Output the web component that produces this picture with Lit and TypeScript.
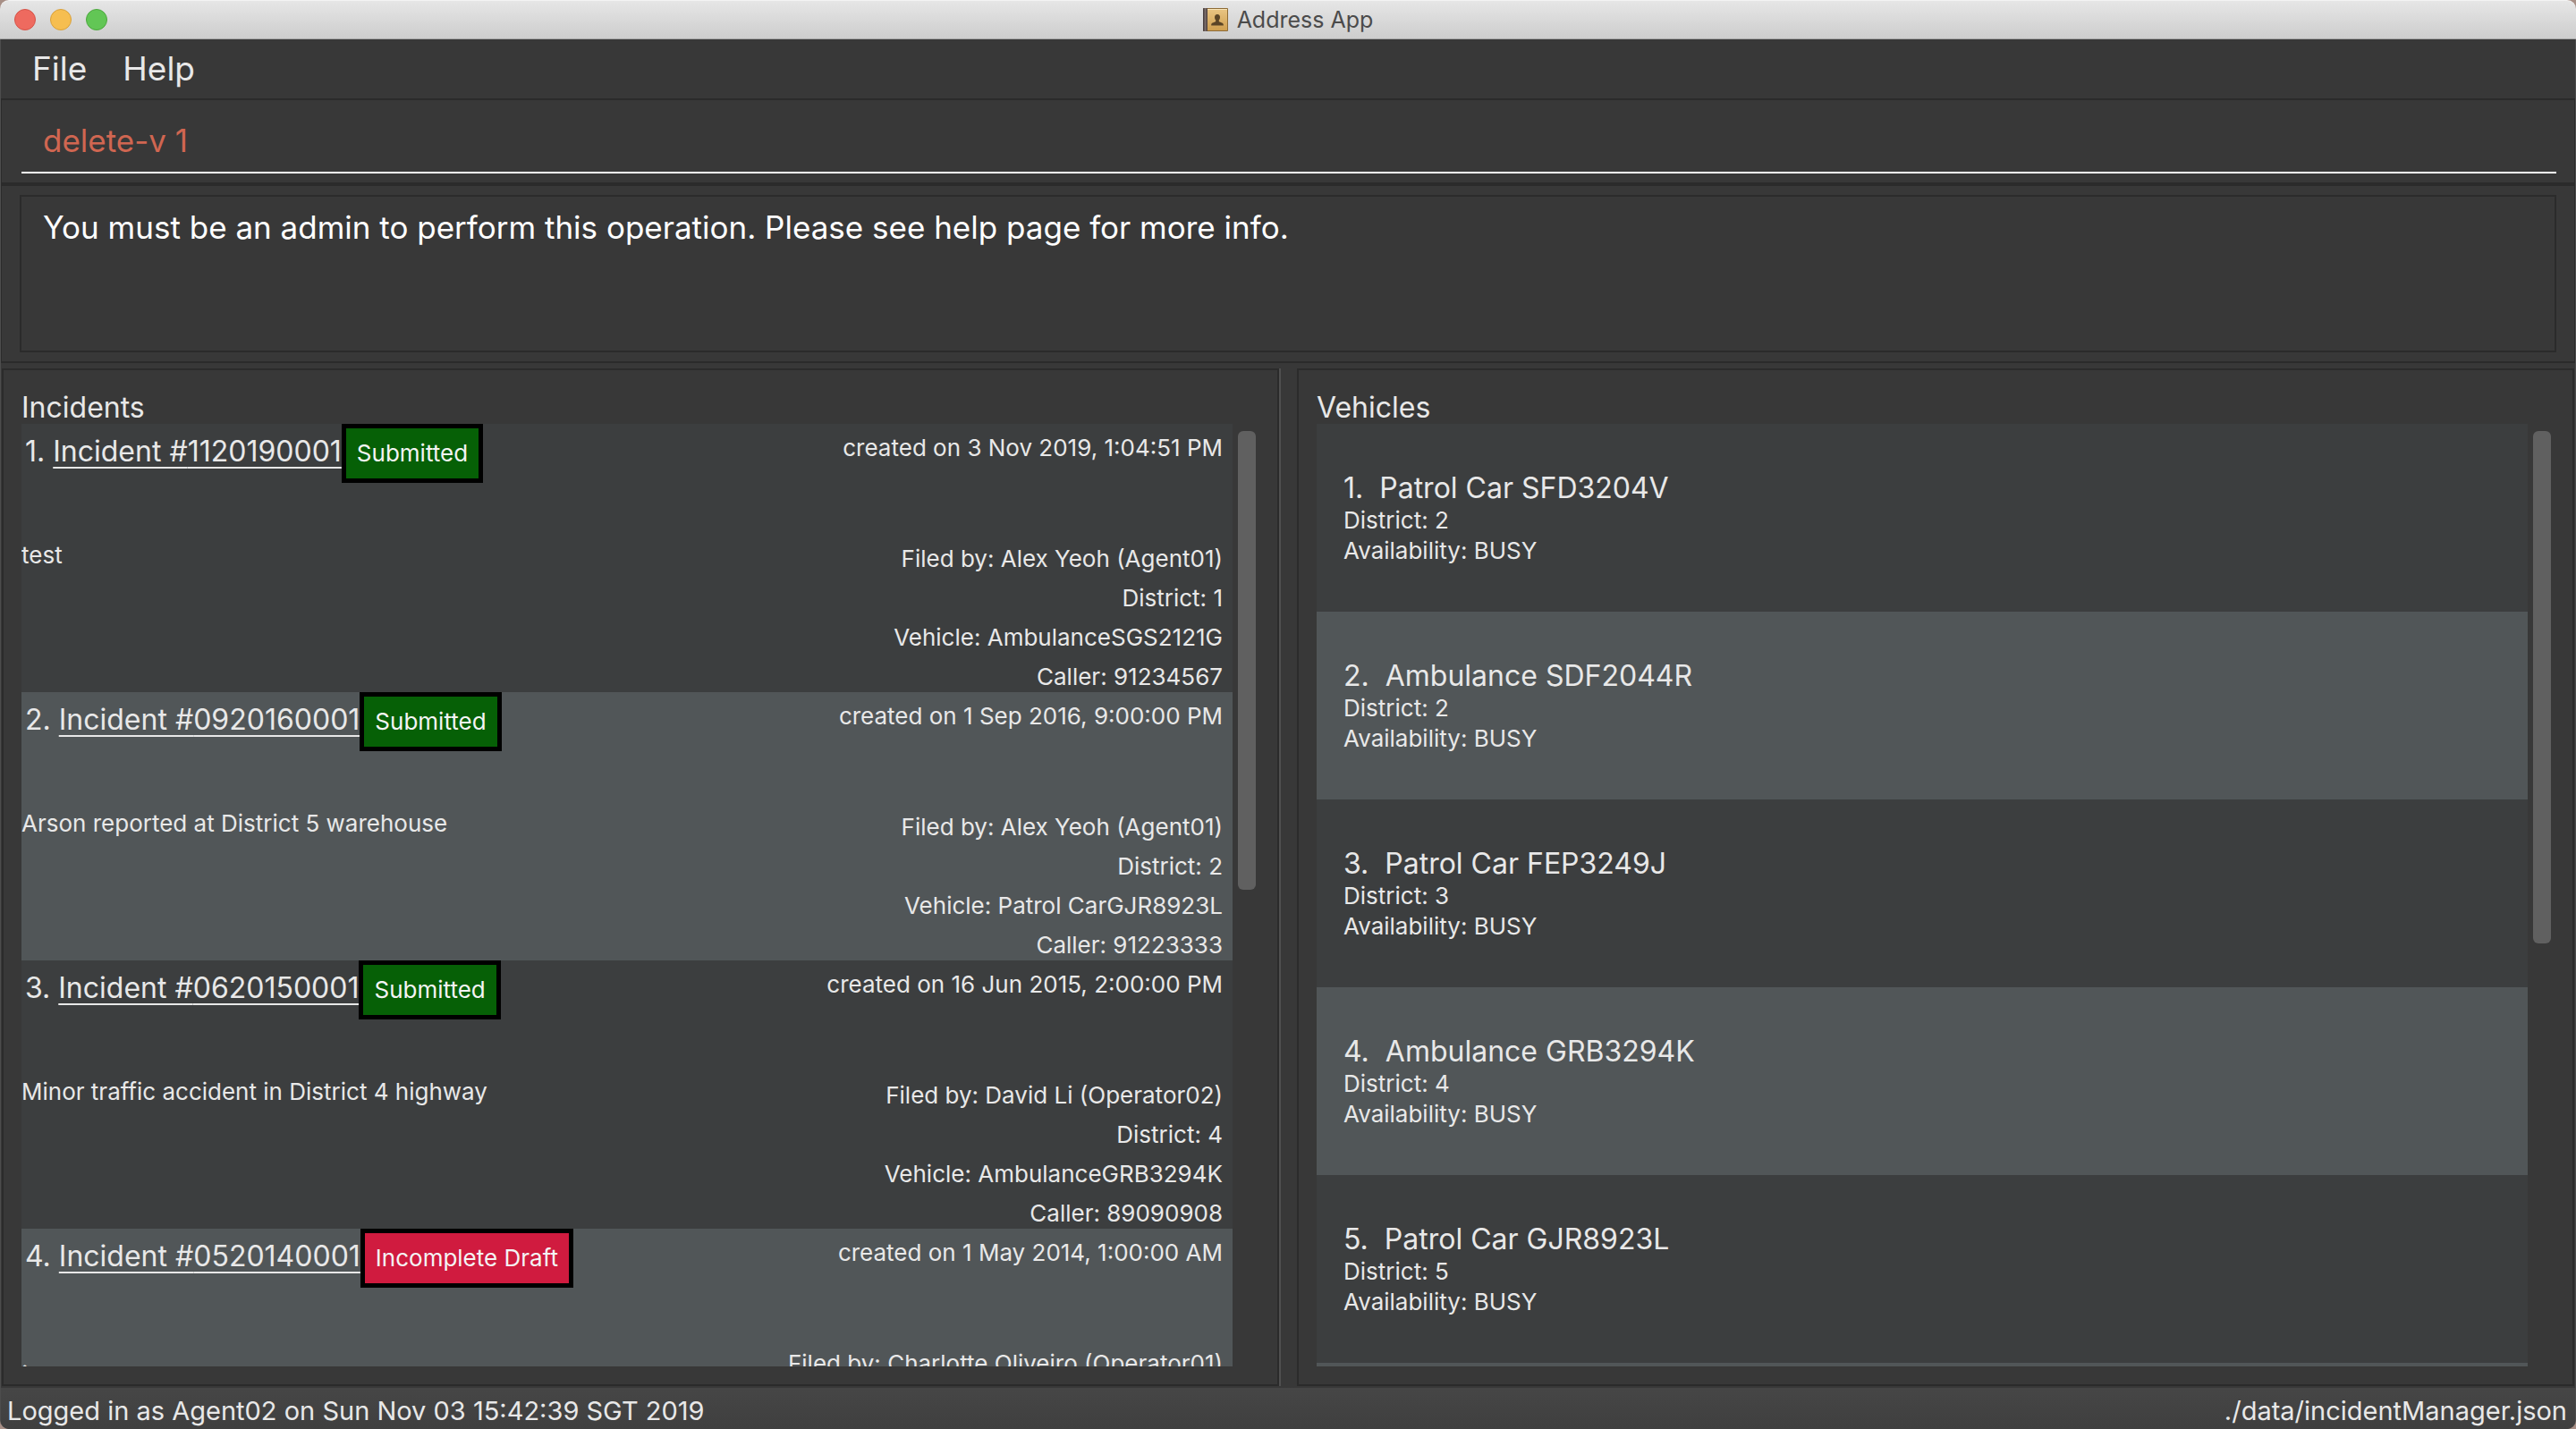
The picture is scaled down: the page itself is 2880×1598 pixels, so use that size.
import { LitElement, html, css, svg, nothing } from "lit";
import { customElement, property } from "lit/decorators.js";
import { classMap } from "lit/directives/class-map.js";
import { styleMap } from "lit/directives/style-map.js";

interface Incident {
  id: string;
  status: "Submitted" | "Incomplete Draft";
  created: string;
  description: string;
  filedBy: string;
  district?: number;
  vehicle?: string;
  caller?: string;
}

interface Vehicle {
  type: string;
  plate: string;
  district: number;
  availability: string;
}

const INCIDENTS: Incident[] = [
  {
    id: "1120190001",
    status: "Submitted",
    created: "3 Nov 2019, 1:04:51 PM",
    description: "test",
    filedBy: "Alex Yeoh (Agent01)",
    district: 1,
    vehicle: "AmbulanceSGS2121G",
    caller: "91234567",
  },
  {
    id: "0920160001",
    status: "Submitted",
    created: "1 Sep 2016, 9:00:00 PM",
    description: "Arson reported at District 5 warehouse",
    filedBy: "Alex Yeoh (Agent01)",
    district: 2,
    vehicle: "Patrol CarGJR8923L",
    caller: "91223333",
  },
  {
    id: "0620150001",
    status: "Submitted",
    created: "16 Jun 2015, 2:00:00 PM",
    description: "Minor traffic accident in District 4 highway",
    filedBy: "David Li (Operator02)",
    district: 4,
    vehicle: "AmbulanceGRB3294K",
    caller: "89090908",
  },
  {
    id: "0520140001",
    status: "Incomplete Draft",
    created: "1 May 2014, 1:00:00 AM",
    description: ".",
    filedBy: "Charlotte Oliveiro (Operator01)",
  },
];

const VEHICLES: Vehicle[] = [
  { type: "Patrol Car", plate: "SFD3204V", district: 2, availability: "BUSY" },
  { type: "Ambulance", plate: "SDF2044R", district: 2, availability: "BUSY" },
  { type: "Patrol Car", plate: "FEP3249J", district: 3, availability: "BUSY" },
  { type: "Ambulance", plate: "GRB3294K", district: 4, availability: "BUSY" },
  { type: "Patrol Car", plate: "GJR8923L", district: 5, availability: "BUSY" },
];

const bookIcon = svg`
  <svg viewBox="0 0 28 26" width="28" height="26" aria-hidden="true">
    <defs>
      <linearGradient id="cover" x1="0" y1="0" x2="0" y2="1">
        <stop offset="0" stop-color="#e9c583" />
        <stop offset="1" stop-color="#cf9f50" />
      </linearGradient>
      <linearGradient id="spine" x1="0" y1="0" x2="1" y2="0">
        <stop offset="0" stop-color="#3d3434" />
        <stop offset="0.5" stop-color="#7a6d6b" />
        <stop offset="1" stop-color="#4a3c36" />
      </linearGradient>
    </defs>
    <rect x="0" y="0" width="28" height="26" rx="1" fill="#8d6a35" />
    <rect x="5" y="1" width="22" height="24" fill="url(#cover)" />
    <rect x="5" y="1" width="22" height="1" fill="#f6e3b8" />
    <rect x="0" y="0" width="5" height="26" rx="1" fill="url(#spine)" />
    <path
      d="M16 7c2 0 3 1.400 3 3.200 0 1.500-.6 2.600-1.200 3.300v1.500c0 .8 5 1.200 5 3.500v1H9.200v-1c0-2.300 5-2.700 5-3.500v-1.500c-.6-.7-1.200-1.800-1.200-3.300C13 8.400 14 7 16 7z"
      fill="#5a4426"
    />
  </svg>
`;

@customElement("scroll-panel")
export class ScrollPanel extends LitElement {
  @property() heading = "";
  @property({ type: Number }) visible = 50;

  static styles = css`
    :host {
      display: flex;
      flex-direction: column;
      min-width: 0;
      min-height: 0;
      box-sizing: border-box;
      border: 2px solid #2b2b2b;
      padding: 24px 24px 20px 20px;
    }
    .heading {
      margin: 0;
      font-size: 32px;
      line-height: 36px;
      font-weight: 400;
      color: #e8e8e8;
    }
    .area {
      flex: 1;
      min-height: 0;
      display: flex;
      gap: 6px;
    }
    .list {
      flex: 1;
      min-width: 0;
      overflow: hidden;
    }
    .track {
      width: 20px;
      padding: 8px 0;
      box-sizing: border-box;
    }
    .thumb {
      border-radius: 6px;
      background: #606060;
    }
  `;

  render() {
    return html`
      <h2 class="heading">${this.heading}</h2>
      <div class="area">
        <div class="list"><slot></slot></div>
        <div class="track">
          <div class="thumb" style=${styleMap({ height: `${this.visible}%` })}></div>
        </div>
      </div>
    `;
  }
}

@customElement("app-root")
export class AppRoot extends LitElement {
  static styles = css`
    :host {
      display: flex;
      flex-direction: column;
      height: 100vh;
      overflow: hidden;
      background: #a78f86;
      color: #e8e8e8;
      font-family: Inter, "Liberation Sans", sans-serif;
      font-size: 26px;
    }
    button,
    input,
    textarea {
      font: inherit;
      color: inherit;
      background: none;
      border: 0;
      margin: 0;
      padding: 0;
      outline: 0;
    }
    .titlebar {
      display: grid;
      grid-template-columns: 1fr auto 1fr;
      align-items: center;
      height: 44px;
      box-sizing: border-box;
      padding: 0 16px;
      border-top: 1px solid #f3f3f3;
      border-bottom: 1px solid #a5a5a5;
      border-radius: 10px 10px 0 0;
      background: linear-gradient(#e6e6e6, #cdcdcd);
    }
    .lights {
      display: flex;
      gap: 16px;
    }
    .light {
      width: 24px;
      height: 24px;
      border-radius: 50%;
      border: 1px solid;
    }
    .close {
      background: #ee6a5f;
      border-color: #d55348;
    }
    .minimise {
      background: #f6be50;
      border-color: #d9a13b;
    }
    .zoom {
      background: #62c655;
      border-color: #4ca73e;
    }
    .title {
      display: flex;
      align-items: center;
      gap: 10px;
      margin: 0;
      font-size: 25px;
      font-weight: 400;
      color: #4b4b4b;
    }
    .title svg {
      display: block;
    }
    .window {
      flex: 1;
      min-height: 0;
      display: flex;
      flex-direction: column;
      border: 1px solid #4d4d4d;
      border-width: 0 1px;
      border-radius: 0 0 10px 10px;
      background: #383838;
      overflow: hidden;
    }
    .menubar {
      display: flex;
      gap: 40px;
      padding: 0 35px;
    }
    .menu {
      font-size: 37px;
      line-height: 66px;
    }
    .strip {
      border: 2px solid #2b2b2b;
      border-width: 2px 1px;
    }
    .command {
      display: block;
      padding: 0 20px 10px 22px;
    }
    .command-box {
      display: block;
      width: 100%;
      box-sizing: border-box;
      height: 82px;
      padding: 10px 24px 0;
      border-bottom: 2px solid #ffffff;
      font-size: 35px;
      color: #d06651;
    }
    .result {
      padding: 10px 20px;
    }
    .result-box {
      display: block;
      width: 100%;
      height: 176px;
      box-sizing: border-box;
      padding: 13px 24px;
      border: 2px solid #2b2b2b;
      font-size: 35px;
      line-height: 42px;
      color: #ffffff;
      resize: none;
      overflow: hidden;
    }
    .panels {
      flex: 1;
      min-height: 0;
      display: grid;
      grid-template-columns: 1fr 20px 1fr;
      grid-template-rows: minmax(0, 1fr);
      padding: 6px 1px 2px;
    }
    .divider {
      border-left: 2px solid #505050;
    }
    .rows {
      list-style: none;
      margin: 0;
      padding: 0;
    }
    .row {
      background: #3c3e3f;
      box-sizing: border-box;
    }
    .row.even {
      background: #515658;
    }
    .incident {
      height: 300px;
      display: grid;
      grid-template-columns: auto 1fr;
      grid-template-rows: 66px 1fr;
      row-gap: 63px;
    }
    .head {
      display: flex;
      align-items: flex-start;
      padding-left: 4px;
    }
    .name {
      font-size: 32px;
      line-height: 62px;
      white-space: pre;
    }
    .link {
      color: inherit;
      text-decoration: underline;
      text-decoration-thickness: 2px;
      text-underline-offset: 6px;
    }
    .badge {
      box-sizing: border-box;
      height: 66px;
      border: 5px solid #000000;
      padding: 0 12px;
      line-height: 56px;
      color: #f4f4f4;
      background: #066006;
    }
    .badge.draft {
      background: #d01b3f;
    }
    .created {
      text-align: right;
      padding-right: 11px;
      line-height: 54px;
    }
    .description {
      line-height: 36px;
    }
    .details {
      text-align: right;
      padding-right: 11px;
      line-height: 44px;
    }
    .vehicle {
      height: 210px;
      padding: 53px 30px 0;
      line-height: 34px;
    }
    .vehicle-name {
      font-size: 32px;
      line-height: 38px;
      white-space: pre;
    }
    .statusbar {
      display: flex;
      justify-content: space-between;
      align-items: center;
      height: 46px;
      box-sizing: border-box;
      padding: 5px 9px 0 7px;
      font-size: 29px;
      line-height: 40px;
      background: linear-gradient(#464646, #3f3f3f);
    }
  `;

  private renderIncident(incident: Incident, index: number) {
    const draft = incident.status === "Incomplete Draft";
    return html`
      <li class=${classMap({ row: true, incident: true, even: index % 2 === 1 })}>
        <div class="head">
          <span class="name">${index + 1}. <a class="link" href="#incident-${incident.id}">Incident #${incident.id}</a></span>
          <span class=${classMap({ badge: true, draft })}>${incident.status}</span>
        </div>
        <div class="created">created on ${incident.created}</div>
        <div class="description">${incident.description}</div>
        <div class="details">
          <div>Filed by: ${incident.filedBy}</div>
          ${incident.district ? html`<div>District: ${incident.district}</div>` : nothing}
          ${incident.vehicle ? html`<div>Vehicle: ${incident.vehicle}</div>` : nothing}
          ${incident.caller ? html`<div>Caller: ${incident.caller}</div>` : nothing}
        </div>
      </li>
    `;
  }

  private renderVehicle(vehicle: Vehicle, index: number) {
    return html`
      <li class=${classMap({ row: true, vehicle: true, even: index % 2 === 1 })}>
        <div class="vehicle-name">${index + 1}.  ${vehicle.type} ${vehicle.plate}</div>
        <div>District: ${vehicle.district}</div>
        <div>Availability: ${vehicle.availability}</div>
      </li>
    `;
  }

  render() {
    return html`
      <header class="titlebar">
        <div class="lights">
          <button class="light close" aria-label="Close"></button>
          <button class="light minimise" aria-label="Minimise"></button>
          <button class="light zoom" aria-label="Zoom"></button>
        </div>
        <h1 class="title">${bookIcon}<span>Address App</span></h1>
      </header>
      <main class="window">
        <nav class="menubar">
          <button class="menu">File</button>
          <button class="menu">Help</button>
        </nav>
        <div class="strip command">
          <input class="command-box" type="text" aria-label="Command" .value=${"delete-v 1"} />
        </div>
        <div class="strip result">
          <textarea
            class="result-box"
            aria-label="Result"
            readonly
            .value=${"You must be an admin to perform this operation. Please see help page for more info."}
          ></textarea>
        </div>
        <div class="panels">
          <scroll-panel heading="Incidents" visible="49.4">
            <ul class="rows">${INCIDENTS.map((item, i) => this.renderIncident(item, i))}</ul>
          </scroll-panel>
          <div class="divider"></div>
          <scroll-panel heading="Vehicles" visible="55.2">
            <ul class="rows">
              ${VEHICLES.map((item, i) => this.renderVehicle(item, i))}
              <li class="row vehicle even"></li>
            </ul>
          </scroll-panel>
        </div>
        <footer class="statusbar">
          <span>Logged in as Agent02 on Sun Nov 03 15:42:39 SGT 2019</span>
          <span>./data/incidentManager.json</span>
        </footer>
      </main>
    `;
  }
}
